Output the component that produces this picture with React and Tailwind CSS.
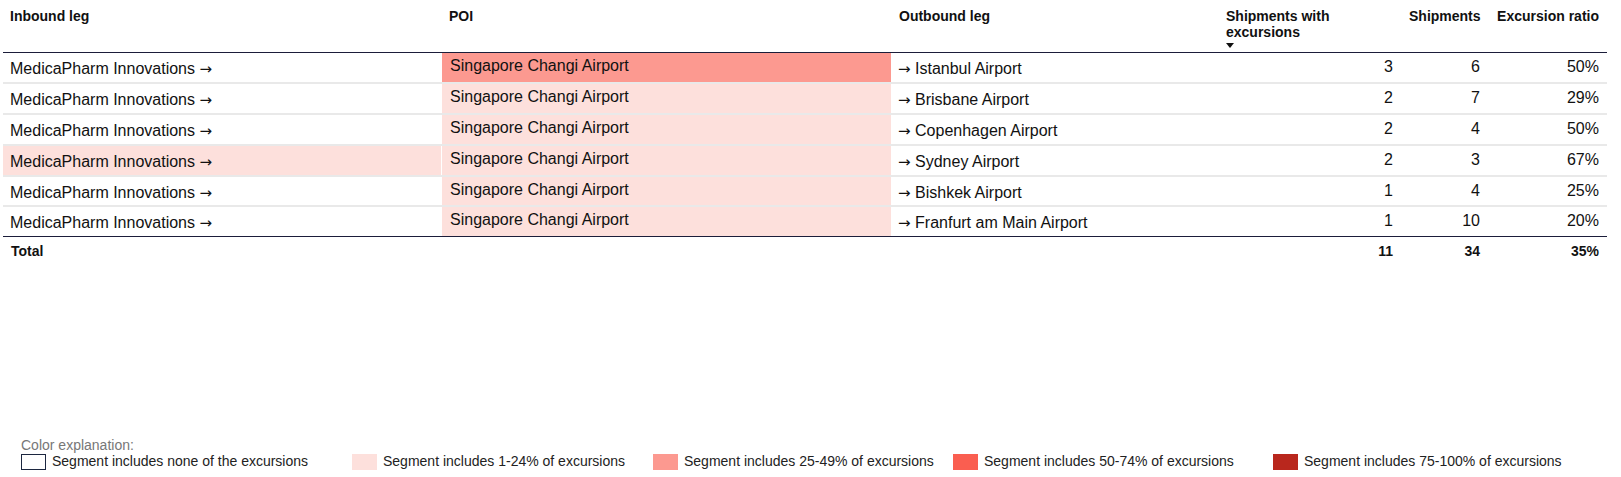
import React from 'react';

const COLS = 'grid grid-cols-[438px_450px_327px_183px_87px_119px]';

const rows = [
  { h: 'h-[31px]', inboundHot: false, poi: 'bg-[#fc9990]', out: 'Istanbul Airport', withExc: 3, total: 6, ratio: '50%' },
  { h: 'h-[31px]', inboundHot: false, poi: 'bg-[#fde0dc]', out: 'Brisbane Airport', withExc: 2, total: 7, ratio: '29%' },
  { h: 'h-[31px]', inboundHot: false, poi: 'bg-[#fde0dc]', out: 'Copenhagen Airport', withExc: 2, total: 4, ratio: '50%' },
  { h: 'h-[31px]', inboundHot: true, poi: 'bg-[#fde0dc]', out: 'Sydney Airport', withExc: 2, total: 3, ratio: '67%' },
  { h: 'h-[30px]', inboundHot: false, poi: 'bg-[#fde0dc]', out: 'Bishkek Airport', withExc: 1, total: 4, ratio: '25%' },
  { h: 'h-[30px]', inboundHot: false, poi: 'bg-[#fde0dc]', out: 'Franfurt am Main Airport', withExc: 1, total: 10, ratio: '20%' },
];

const legend = [
  { swatch: 'bg-white border border-[#1c2740]', label: 'Segment includes none of the excursions', width: 'w-[331px]' },
  { swatch: 'bg-[#fde0dc]', label: 'Segment includes 1-24% of excursions', width: 'w-[301px]' },
  { swatch: 'bg-[#fc9990]', label: 'Segment includes 25-49% of excursions', width: 'w-[300px]' },
  { swatch: 'bg-[#fa5e50]', label: 'Segment includes 50-74% of excursions', width: 'w-[320px]' },
  { swatch: 'bg-[#b9271d]', label: 'Segment includes 75-100% of excursions', width: '' },
];

// arrow glyph: DejaVu centres it on the x-height like the original
function Arrow() {
  return <span className="font-['DejaVu_Sans',sans-serif] text-[15px]">→</span>;
}

function SortArrow() {
  return (
    <svg width="8" height="5" viewBox="0 0 8 5" className="mt-[3px]">
      <path d="M0 0 L8 0 L4 5 Z" fill="#111" />
    </svg>
  );
}

export default function App() {
  return (
    <div className="h-screen flex flex-col bg-white text-[#111] font-['Liberation_Sans',Arial,sans-serif]">
      {/* Table */}
      <div className="ml-[3px] w-[1604px]">
        {/* Header */}
        <div className={`${COLS} h-[53px] border-b border-[#1b1d3a] text-[14px] leading-4 font-bold`}>
          <div className="px-[7px] pt-[8px]">Inbound leg</div>
          <div className="px-2 pt-[8px]">POI</div>
          <div className="px-2 pt-[8px]">Outbound leg</div>
          <div className="px-2 pt-[8px] flex flex-col items-start">
            <span>Shipments with excursions</span>
            <SortArrow />
          </div>
          <div className="px-2 pt-[8px] text-right">Shipments</div>
          <div className="px-2 pt-[8px] text-right">Excursion ratio</div>
        </div>

        {/* Body */}
        {rows.map((r, i) => {
          const last = i === rows.length - 1;
          return (
            <div
              key={i}
              className={`${COLS} ${r.h} text-[16px] leading-[18px] ${
                last ? 'border-b border-[#1b1d3a]' : 'border-b-2 border-[#e9e9e9]'
              }`}
            >
              <div className={`px-[7px] pt-[7px] ${r.inboundHot ? 'bg-[#fde0dc]' : ''}`}>
                MedicaPharm Innovations <Arrow />
              </div>
              <div className={`px-2 pt-[4px] border-l border-white ${r.poi}`}>Singapore Changi Airport</div>
              <div className="px-[7px] pt-[7px]">
                <Arrow /> {r.out}
              </div>
              <div className="px-2 pt-[5px] text-right">{r.withExc}</div>
              <div className="px-2 pt-[5px] text-right">{r.total}</div>
              <div className="px-2 pt-[5px] text-right">{r.ratio}</div>
            </div>
          );
        })}

        {/* Total */}
        <div className={`${COLS} h-[26px] pt-[6px] text-[14px] leading-4 font-bold`}>
          <div className="px-2">Total</div>
          <div />
          <div />
          <div className="px-2 text-right">11</div>
          <div className="px-2 text-right">34</div>
          <div className="px-2 text-right">35%</div>
        </div>
      </div>

      {/* Legend */}
      <div className="mt-auto pl-[21px] pb-[7px] text-[14px] leading-4">
        <div className="text-[#777]">Color explanation:</div>
        <div className="flex items-start">
          {legend.map((l) => (
            <div key={l.label} className={`flex items-start gap-[6px] ${l.width}`}>
              <span className={`mt-[1px] w-[25px] h-[16px] shrink-0 ${l.swatch}`} />
              <span className="text-[#222]">{l.label}</span>
            </div>
          ))}
        </div>
      </div>
    </div>
  );
}
